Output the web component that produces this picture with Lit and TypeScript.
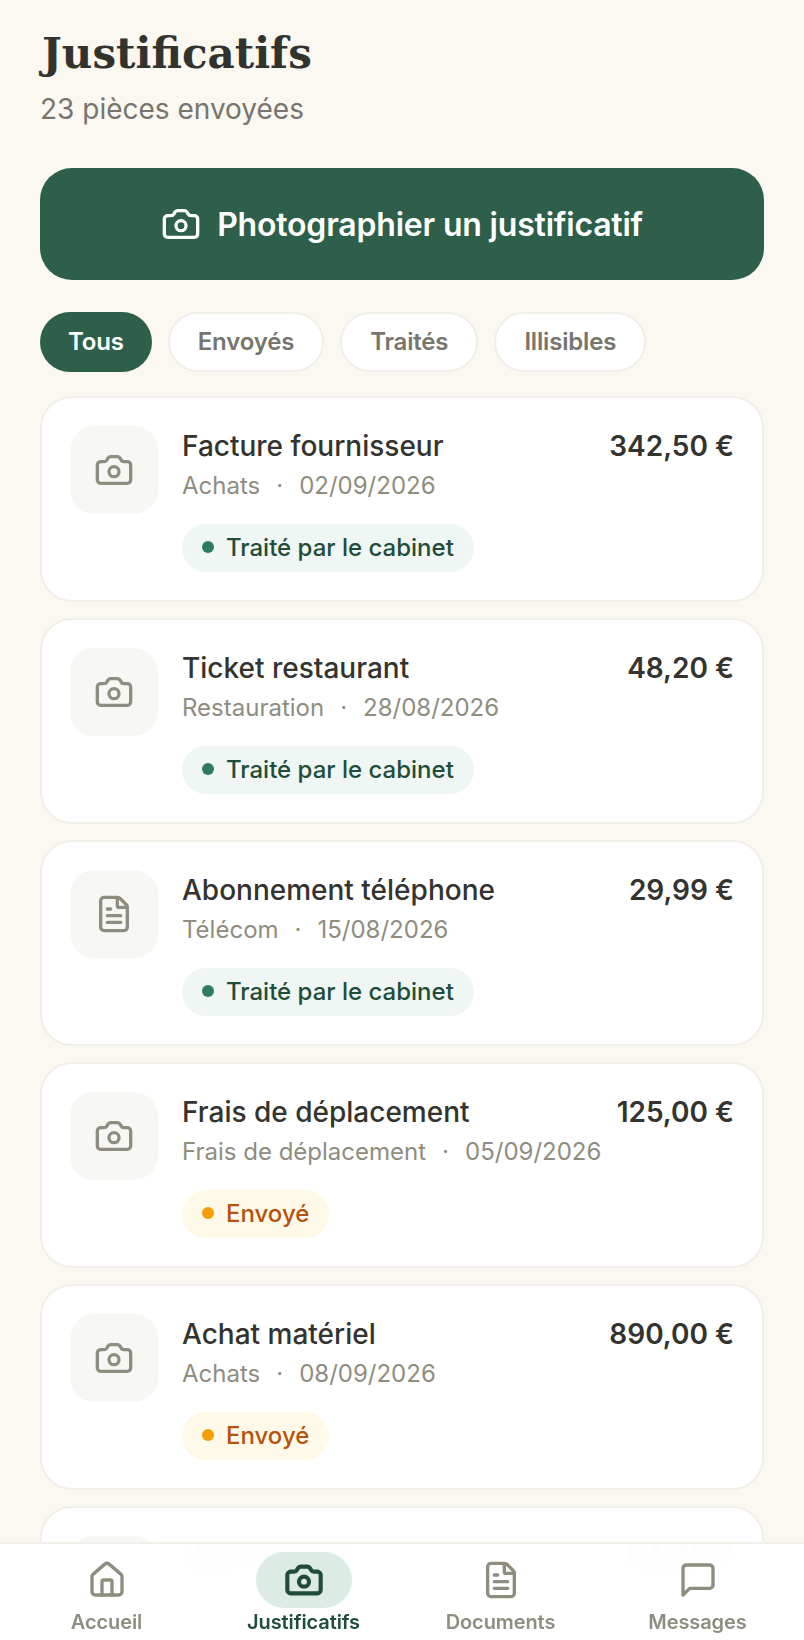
import { LitElement, html, css, svg, nothing } from "lit";
import { customElement } from "lit/decorators.js";

const icons: Record<string, unknown> = {
  camera: svg`<path d="M13.997 4a2 2 0 0 1 1.76 1.05l.486.9A2 2 0 0 0 18.003 7H20a2 2 0 0 1 2 2v9a2 2 0 0 1-2 2H4a2 2 0 0 1-2-2V9a2 2 0 0 1 2-2h1.997a2 2 0 0 0 1.759-1.048l.489-.904A2 2 0 0 1 10.004 4z"/><circle cx="12" cy="13" r="3"/>`,
  file: svg`<path d="M6 22a2 2 0 0 1-2-2V4a2 2 0 0 1 2-2h8a2.4 2.4 0 0 1 1.704.706l3.588 3.588A2.4 2.4 0 0 1 20 8v12a2 2 0 0 1-2 2z"/><path d="M14 2v5a1 1 0 0 0 1 1h5"/><path d="M10 9H8"/><path d="M16 13H8"/><path d="M16 17H8"/>`,
  home: svg`<path d="M15 21v-8a1 1 0 0 0-1-1h-4a1 1 0 0 0-1 1v8"/><path d="M3 10a2 2 0 0 1 .709-1.528l7-6a2 2 0 0 1 2.582 0l7 6A2 2 0 0 1 21 10v9a2 2 0 0 1-2 2H5a2 2 0 0 1-2-2z"/>`,
  message: svg`<path d="M21 15a2 2 0 0 1-2 2H7l-4 4V5a2 2 0 0 1 2-2h14a2 2 0 0 1 2 2z"/>`,
};

const icon = (name: string) =>
  html`<svg class="ic" viewBox="0 0 24 24" fill="none" stroke="currentColor" stroke-linecap="round" stroke-linejoin="round">${icons[name]}</svg>`;

type Row = { t: string; c: string; d: string; a: string; i: string; s?: "ok" | "sent" };
const rows: Row[] = [
  { t: "Facture fournisseur", c: "Achats", d: "02/09/2026", a: "342,50 €", i: "camera", s: "ok" },
  { t: "Ticket restaurant", c: "Restauration", d: "28/08/2026", a: "48,20 €", i: "camera", s: "ok" },
  { t: "Abonnement téléphone", c: "Télécom", d: "15/08/2026", a: "29,99 €", i: "file", s: "ok" },
  { t: "Frais de déplacement", c: "Frais de déplacement", d: "05/09/2026", a: "125,00 €", i: "camera", s: "sent" },
  { t: "Achat matériel", c: "Achats", d: "08/09/2026", a: "890,00 €", i: "camera", s: "sent" },
  { t: "Note de frais", c: "Divers", d: "01/09/2026", a: "64,00 €", i: "camera" },
];
const nav = [
  { l: "Accueil", i: "home" },
  { l: "Justificatifs", i: "camera", on: true },
  { l: "Documents", i: "file" },
  { l: "Messages", i: "message" },
];

@customElement("app-root")
export class AppRoot extends LitElement {
  static styles = css`
    :host { display: block; position: relative; height: 1640px; overflow: hidden; background: #fbf8f1; font-family: Inter, "Liberation Sans", sans-serif; }
    .page { padding: 26px 40px 0; }
    h1 { margin: 0 0 0 2px; font: 700 42px/56px "DejaVu Serif", serif; color: #33332e; }
    .count { margin: 7px 0 0; font-size: 28px; line-height: 40px; color: #77756e; }
    .cta { margin-top: 39px; height: 112px; border-radius: 32px; background: #2d5f4a; color: #fff; display: flex; align-items: center; justify-content: center; gap: 16px; font-size: 32px; font-weight: 600; letter-spacing: -0.2px; }
    .cta .ic { width: 40px; height: 40px; stroke-width: 2; }
    .filters { display: flex; gap: 16px; margin-top: 32px; }
    .chip { height: 60px; box-sizing: border-box; padding: 0 28px 2px; border: 2px solid #f0efe9; border-radius: 30px; background: #fff; color: #77756e; font-size: 24px; font-weight: 600; letter-spacing: -0.18px; display: flex; align-items: center; }
    .chip.on { background: #2d5f4a; border: 0; color: #fff; }
    .list { display: flex; flex-direction: column; gap: 16px; margin-top: 24px; }
    .card { display: flex; gap: 24px; padding: 28px; border: 2px solid #f0efe9; border-radius: 32px; background: #fff; }
    .thumb { width: 88px; height: 88px; flex: none; border-radius: 24px; background: #f7f7f4; color: #8e8d7f; display: flex; align-items: center; justify-content: center; }
    .thumb .ic { width: 40px; height: 40px; stroke-width: 2; }
    .body { flex: 1; min-width: 0; }
    .top { display: flex; justify-content: space-between; gap: 16px; font-size: 28px; line-height: 40px; color: #33332f; }
    .name { font-weight: 500; }
    .amt { font-weight: 600; }
    .sub { display: flex; gap: 16px; font-size: 24px; line-height: 40px; color: #8e8d7f; }
    .pill { display: inline-flex; align-items: center; gap: 12px; height: 48px; box-sizing: border-box; margin-top: 18px; padding: 0 20px 2px; border-radius: 24px; font-size: 24px; font-weight: 500; }
    .pill i { width: 12px; height: 12px; border-radius: 50%; }
    .pill.ok { background: #f0f6f3; color: #1f4d3a; }
    .pill.ok i { background: #2f7d5f; }
    .pill.sent { background: #fff9ea; color: #b4530a; }
    .pill.sent i { background: #f59e0b; }
    nav { position: absolute; left: 0; right: 0; bottom: 0; height: 98px; box-sizing: border-box; display: flex; padding: 8px 8px 0; border-top: 2px solid #f0efe9; background: rgba(255,255,255,.97); backdrop-filter: blur(12px); }
    .tab { flex: 1; display: flex; flex-direction: column; align-items: center; color: #8e8d7f; font-size: 20px; font-weight: 600; letter-spacing: -0.1px; line-height: 24px; }
    .box { width: 96px; height: 56px; border-radius: 28px; display: flex; align-items: center; justify-content: center; margin-bottom: 2px; }
    .box .ic { width: 40px; height: 40px; stroke-width: 2; }
    .tab.on { color: #1f4d3a; }
    .tab.on .box { background: #dcebe4; }
    .tab.on .ic { stroke-width: 2.5; }
  `;

  render() {
    return html`
      <main class="page">
        <h1>Justificatifs</h1>
        <p class="count">23 pièces envoyées</p>
        <div class="cta">${icon("camera")}<span>Photographier un justificatif</span></div>
        <div class="filters">
          <div class="chip on">Tous</div>
          <div class="chip">Envoyés</div>
          <div class="chip">Traités</div>
          <div class="chip">Illisibles</div>
        </div>
        <div class="list">
          ${rows.map(r => html`
            <article class="card">
              <div class="thumb">${icon(r.i)}</div>
              <div class="body">
                <div class="top"><span class="name">${r.t}</span><span class="amt">${r.a}</span></div>
                <div class="sub"><span>${r.c}</span><span>·</span><span>${r.d}</span></div>
                ${r.s ? html`<div class="pill ${r.s}"><i></i>${r.s === "ok" ? "Traité par le cabinet" : "Envoyé"}</div>` : nothing}
              </div>
            </article>`)}
        </div>
      </main>
      <nav>
        ${nav.map(n => html`<div class="tab ${n.on ? "on" : ""}"><div class="box">${icon(n.i)}</div>${n.l}</div>`)}
      </nav>
    `;
  }
}
